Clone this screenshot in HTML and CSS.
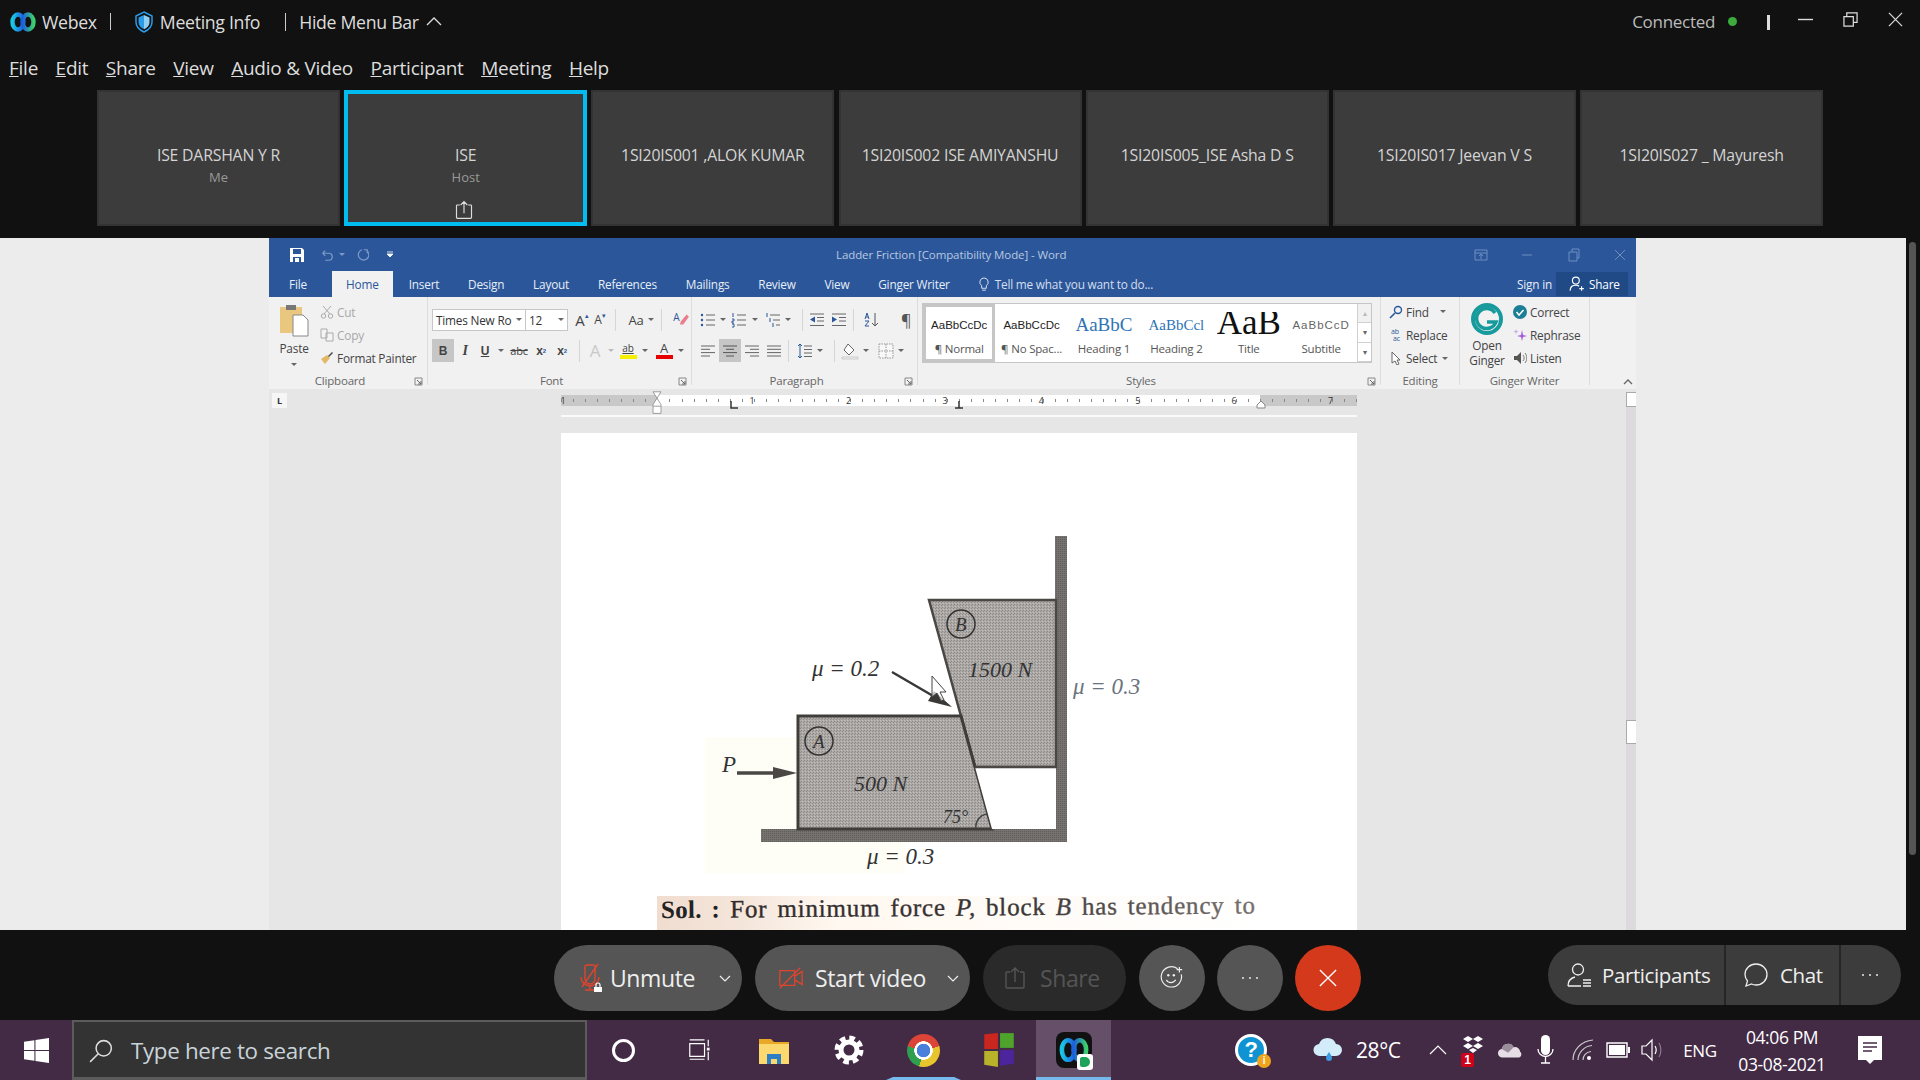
FILE: index.html
```html
<!DOCTYPE html>
<html>
<head>
    <title>Webex Meeting</title>
    <link rel="stylesheet" href="styles.css">
</head>
<body>
    <!-- shared small icons -->
    <svg class="defs" width="0" height="0">
        <symbol id="lines-left" viewBox="0 0 16 16"><path d="M1 3h14M1 6.3h9M1 9.6h14M1 13h9" stroke="#666" fill="none"/></symbol>
        <symbol id="lines-center" viewBox="0 0 16 16"><path d="M1 3h14M4 6.3h8M1 9.6h14M4 13h8" stroke="#555" fill="none"/></symbol>
        <symbol id="lines-right" viewBox="0 0 16 16"><path d="M1 3h14M6 6.3h9M1 9.6h14M6 13h9" stroke="#666" fill="none"/></symbol>
        <symbol id="lines-full" viewBox="0 0 16 16"><path d="M1 3h14M1 6.3h14M1 9.6h14M1 13h14" stroke="#666" fill="none"/></symbol>
        <symbol id="bullets" viewBox="0 0 16 16"><path d="M6 3h9M6 8h9M6 13h9" stroke="#666" fill="none"/><circle cx="2" cy="3" r="1.2" fill="#2b579a"/><circle cx="2" cy="8" r="1.2" fill="#2b579a"/><circle cx="2" cy="13" r="1.2" fill="#2b579a"/></symbol>
        <symbol id="numbers" viewBox="0 0 16 16"><path d="M6 3h9M6 8h9M6 13h9" stroke="#666" fill="none"/><path d="M2 1v4M1 7h2v2H1v2h2M1 12h2v3H1" stroke="#2b579a" fill="none"/></symbol>
        <symbol id="multilevel" viewBox="0 0 16 16"><path d="M5 3h10M8 8h7M11 13h4" stroke="#666" fill="none"/><path d="M2 1v4M5 6v4M8 11v4" stroke="#2b579a" fill="none"/></symbol>
        <symbol id="indent-less" viewBox="0 0 16 16"><path d="M1 2h14M8 5.5h7M8 9h7M1 13.5h14" stroke="#666" fill="none"/><path d="M6 4.5v6L1 7.5z" fill="#2b579a"/></symbol>
        <symbol id="indent-more" viewBox="0 0 16 16"><path d="M1 2h14M8 5.5h7M8 9h7M1 13.5h14" stroke="#666" fill="none"/><path d="M1 4.5v6l5-3z" fill="#2b579a"/></symbol>
        <symbol id="dots" viewBox="0 0 20 4"><circle cx="3" cy="2" r="1.1" fill="#ddd"/><circle cx="10" cy="2" r="1.1" fill="#ddd"/><circle cx="17" cy="2" r="1.1" fill="#ddd"/></symbol>
        <symbol id="launcher" viewBox="0 0 9 9"><path d="M1 1h7v7H1z" fill="none" stroke="#888"/><path d="M3 3l4 4M7 4v3H4" stroke="#666" fill="none"/></symbol>
        <symbol id="share-tray" viewBox="0 0 24 24"><path d="M7 6H4a1 1 0 0 0-1 1v14a1 1 0 0 0 1 1h16a1 1 0 0 0 1-1V7a1 1 0 0 0-1-1h-3M12 16V2M8 6l4-4 4 4" fill="none" stroke="currentColor" stroke-width="1.4"/></symbol>
    </svg>

    <!-- top window bar -->
    <header class="titlebar">
        <svg class="webex-logo" viewBox="0 0 26 20">
            <defs>
                <linearGradient id="wxa" x1="0" x2="1"><stop offset="0" stop-color="#19c6e6"/><stop offset="1" stop-color="#1c5fe0"/></linearGradient>
                <linearGradient id="wxb" x1="0" x2="1"><stop offset="0" stop-color="#1c5fe0"/><stop offset="1" stop-color="#3ccf6c"/></linearGradient>
            </defs>
            <ellipse cx="8" cy="10" rx="5.5" ry="7.5" fill="none" stroke="url(#wxa)" stroke-width="4.4"/>
            <ellipse cx="18" cy="10" rx="5.5" ry="7.5" fill="none" stroke="url(#wxb)" stroke-width="4.4"/>
        </svg>
        <span class="app-name">Webex</span>
        <span class="bar-sep sep-a"></span>
        <svg class="shield" viewBox="0 0 18 22">
            <path d="M9 1l8 4v6c0 5-3.500 8-8 10-4.500-2-8-5-8-10V5z" fill="none" stroke="#2b9be8" stroke-width="1.500"/>
            <path d="M9 4L3.500 6.500V11c0 3.500 2.400 5.800 5.500 7.300z" fill="#2b9be8"/>
            <path d="M9 4l5.500 2.500V11c0 3.500-2.400 5.800-5.500 7.300z" fill="#8ed0f5"/>
        </svg>
        <span class="bar-link meeting-info">Meeting Info</span>
        <span class="bar-sep sep-b"></span>
        <span class="bar-link">Hide Menu Bar</span>
        <svg class="chevron-up" viewBox="0 0 16 9"><path d="M1 8l7-7 7 7" fill="none" stroke="#ddd" stroke-width="1.300"/></svg>

        <div class="titlebar-right">
            <span class="connected">Connected</span>
            <span class="green-dot"></span>
            <span class="thick-sep"></span>
            <svg class="win-btn" viewBox="0 0 16 16"><path d="M0 8h16" stroke="#ddd" stroke-width="1.500"/></svg>
            <svg class="win-btn" viewBox="0 0 16 16"><path d="M1 5h10v10H1zM4 5V1h11v10h-4" fill="none" stroke="#ddd" stroke-width="1.300"/></svg>
            <svg class="win-btn" viewBox="0 0 16 16"><path d="M1 1l14 14M15 1L1 15" stroke="#ddd" stroke-width="1.300"/></svg>
        </div>
    </header>

    <nav class="menubar">
        <span><u>F</u>ile</span>
        <span><u>E</u>dit</span>
        <span><u>S</u>hare</span>
        <span><u>V</u>iew</span>
        <span><u>A</u>udio &amp; Video</span>
        <span><u>P</u>articipant</span>
        <span><u>M</u>eeting</span>
        <span><u>H</u>elp</span>
    </nav>

    <section class="tiles">
        <div class="tile"><div class="tile-name">ISE DARSHAN Y R</div><div class="tile-role">Me</div></div>
        <div class="tile tile-active">
            <div class="tile-name">ISE</div><div class="tile-role">Host</div>
            <svg class="tile-share" viewBox="0 0 24 24"><use href="#share-tray"/></svg>
        </div>
        <div class="tile"><div class="tile-name">1SI20IS001 ,ALOK KUMAR</div></div>
        <div class="tile"><div class="tile-name">1SI20IS002 ISE AMIYANSHU</div></div>
        <div class="tile"><div class="tile-name">1SI20IS005_ISE Asha D S</div></div>
        <div class="tile"><div class="tile-name">1SI20IS017 Jeevan V S</div></div>
        <div class="tile"><div class="tile-name">1SI20IS027 _ Mayuresh</div></div>
    </section>

    <!-- shared screen -->
    <main class="stage">
        <div class="shared">
            <div class="word">
                <div class="word-title">
                    <div class="qat">
                        <svg class="qat-ic qat-save" viewBox="0 0 16 16"><path d="M1 1h12l2 2v12H1z" fill="#fff"/><path d="M4 2h8v5H4z" fill="#2b579a"/><path d="M4 10h8v5H4z" fill="#2b579a"/><path d="M6 11h4v4H6z" fill="#fff"/></svg>
                        <svg class="qat-ic dim" viewBox="0 0 16 16"><path d="M3 6h7a4 4 0 0 1 0 8H6M3 6l3-3M3 6l3 3" fill="none" stroke="#7d9ac6" stroke-width="1.400"/></svg>
                        <i class="caret caret-dim"></i>
                        <svg class="qat-ic dim" viewBox="0 0 16 16"><path d="M10 2h4v4M13.500 3A6 6 0 1 1 8 2" fill="none" stroke="#7d9ac6" stroke-width="1.400"/></svg>
                        <svg class="qat-more" viewBox="0 0 8 8"><path d="M1 1h6M1 3l3 3 3-3z" fill="#fff" stroke="#fff" stroke-width=".8"/></svg>
                    </div>
                    <div class="doc-title">Ladder Friction [Compatibility Mode] - Word</div>
                    <div class="word-win">
                        <svg viewBox="0 0 14 14"><path d="M1 2h12v10H1zM1 5h12M7 11V6M5 8l2-2 2 2" fill="none" stroke="#6f8fc0"/></svg>
                        <svg viewBox="0 0 14 14"><path d="M2 7h10" stroke="#6f8fc0"/></svg>
                        <svg viewBox="0 0 14 14"><path d="M2 4h8v9H2zM5 4V1h7v9h-2" fill="none" stroke="#6f8fc0"/></svg>
                        <svg viewBox="0 0 14 14"><path d="M2 2l10 10M12 2L2 12" stroke="#6f8fc0"/></svg>
                    </div>
                </div>
                <div class="word-tabs">
                    <span class="wtab tab-file">File</span>
                    <span class="wtab tab-home">Home</span>
                    <span class="wtab">Insert</span>
                    <span class="wtab">Design</span>
                    <span class="wtab">Layout</span>
                    <span class="wtab">References</span>
                    <span class="wtab">Mailings</span>
                    <span class="wtab">Review</span>
                    <span class="wtab">View</span>
                    <span class="wtab">Ginger Writer</span>
                    <svg class="bulb" viewBox="0 0 12 16"><path d="M6 1a4.500 4.500 0 0 0-2.500 8.200V12h5V9.200A4.500 4.500 0 0 0 6 1zM4 14h4" fill="none" stroke="#dfe7f3"/></svg>
                    <span class="tell-me">Tell me what you want to do...</span>
                    <span class="sign-in">Sign in</span>
                    <span class="word-share">
                        <svg viewBox="0 0 14 14"><circle cx="6" cy="4" r="3" fill="none" stroke="#fff"/><path d="M1 13c0-3 2-5 5-5 1 0 2 .3 2.800 1M11 9v4M9 11h4" fill="none" stroke="#fff"/></svg>
                        Share
                    </span>
                </div>

                <div class="ribbon">
                    <div class="rgroup g-clipboard">
                        <div class="rbody clip-body">
                            <div class="paste">
                                <svg class="paste-ic" viewBox="0 0 30 34">
                                    <path d="M1 4h22v26H1z" fill="#eac77f"/>
                                    <path d="M7 2h10v5H7z" fill="#777"/>
                                    <path d="M14 12h10l5 5v16H14z" fill="#fff" stroke="#888"/>
                                </svg>
                                <span>Paste</span>
                                <i class="caret"></i>
                            </div>
                            <div class="clip-list">
                                <div class="clip-item off"><svg viewBox="0 0 14 14"><path d="M3 1l7 8M11 1L4 9" stroke="#aaa" fill="none"/><circle cx="3.500" cy="11" r="2.200" fill="none" stroke="#aaa"/><circle cx="10.500" cy="11" r="2.200" fill="none" stroke="#aaa"/></svg>Cut</div>
                                <div class="clip-item off"><svg viewBox="0 0 14 14"><path d="M1 1h6v9H1zM6 5h7v8H6z" fill="#f4f4f4" stroke="#aaa"/></svg>Copy</div>
                                <div class="clip-item"><svg viewBox="0 0 14 14"><path d="M1 8l6-4 3 3-5 6z" fill="#e2b866"/><path d="M8 5l4-4 1 1-4 4z" fill="#444"/></svg>Format Painter</div>
                            </div>
                        </div>
                        <div class="rlabel shifted">Clipboard<svg class="launch" viewBox="0 0 9 9"><use href="#launcher"/></svg></div>
                    </div>

                    <div class="rgroup g-font">
                        <div class="rbody rows">
                            <div class="trow">
                                <span class="combo combo-font">Times New Ro<i class="caret"></i></span>
                                <span class="combo combo-size">12<i class="caret"></i></span>
                                <span class="tool w18 big-a">A<sup>▴</sup></span>
                                <span class="tool w18 small-a">A<sup>▾</sup></span>
                                <span class="vsep"></span>
                                <span class="tool w24 case-a">Aa<i class="caret"></i></span>
                                <span class="vsep"></span>
                                <svg class="ic18 ml4" viewBox="0 0 16 16"><path d="M8 9l5-6 2 2-5 7H7z" fill="#e87d8d"/><text x="1" y="9" font-size="9" fill="#2b579a">A</text></svg>
                            </div>
                            <div class="trow">
                                <span class="tool w22 on fmt">B</span>
                                <span class="tool w22 fmt-i">I</span>
                                <span class="tool w18 fmt-u">U</span><i class="caret"></i>
                                <span class="tool w24 fmt-s">abc</span>
                                <span class="tool w20 fmt">x<sub>2</sub></span>
                                <span class="tool w22 fmt">x<sup>2</sup></span>
                                <span class="vsep"></span>
                                <span class="tool w18 ghost-a">A</span><i class="caret caret-light"></i>
                                <span class="tool w20 mark ml4"><span class="mark-ab">ab</span><b class="swatch yellow"></b></span><i class="caret"></i>
                                <span class="tool w20 mark ml6"><span class="mark-a">A</span><b class="swatch red"></b></span><i class="caret"></i>
                            </div>
                        </div>
                        <div class="rlabel shifted">Font<svg class="launch" viewBox="0 0 9 9"><use href="#launcher"/></svg></div>
                    </div>

                    <div class="rgroup g-para">
                        <div class="rbody rows">
                            <div class="trow">
                                <svg class="ic16" viewBox="0 0 16 16"><use href="#bullets"/></svg><i class="caret m4"></i>
                                <svg class="ic16" viewBox="0 0 16 16"><use href="#numbers"/></svg><i class="caret m5"></i>
                                <svg class="ic16" viewBox="0 0 16 16"><use href="#multilevel"/></svg><i class="caret m4"></i>
                                <span class="vsep"></span>
                                <svg class="ic16" viewBox="0 0 16 16"><use href="#indent-less"/></svg>
                                <svg class="ic16 ml6" viewBox="0 0 16 16"><use href="#indent-more"/></svg>
                                <span class="vsep sep-wide"></span>
                                <svg class="ic16" viewBox="0 0 16 16"><path d="M2 7l2-6 2 6M3 5h2M2 9h4l-4 5h4" fill="none" stroke="#2b579a"/><path d="M12 1v13M9 11l3 3 3-3" fill="none" stroke="#555"/></svg>
                                <span class="pilcrow">¶</span>
                            </div>
                            <div class="trow">
                                <svg class="ic16" viewBox="0 0 16 16"><use href="#lines-left"/></svg>
                                <span class="tool w22 on ml3"><svg class="ic16" viewBox="0 0 16 16"><use href="#lines-center"/></svg></span>
                                <svg class="ic16 ml3" viewBox="0 0 16 16"><use href="#lines-right"/></svg>
                                <svg class="ic16 ml6" viewBox="0 0 16 16"><use href="#lines-full"/></svg>
                                <span class="vsep"></span>
                                <svg class="ic16 ml2" viewBox="0 0 16 16"><path d="M7 3h8M7 6.500h8M7 10h8M7 13.500h8" stroke="#666"/><path d="M3 1v14M1 3l2-2 2 2M1 13l2 2 2-2" fill="none" stroke="#2b579a"/></svg><i class="caret m4"></i>
                                <span class="vsep"></span>
                                <svg class="ic18" viewBox="0 0 18 18"><path d="M7 2l6 6-5 5-5-5z" fill="#fff" stroke="#666"/><path d="M1 15h16v2H1z" fill="#eee" stroke="#aaa" stroke-width=".5"/></svg><i class="caret m4"></i>
                                <svg class="ic16 ml4" viewBox="0 0 16 16"><path d="M1 1h14v14H1zM8 1v14M1 8h14" fill="#f8f8f8" stroke="#999" stroke-dasharray="1.500 1"/></svg><i class="caret m4"></i>
                            </div>
                        </div>
                        <div class="rlabel shifted">Paragraph<svg class="launch" viewBox="0 0 9 9"><use href="#launcher"/></svg></div>
                    </div>

                    <div class="rgroup g-styles">
                        <div class="rbody gallery-wrap">
                            <div class="gallery">
                                <div class="sitem sitem-on"><span class="sample s-normal">AaBbCcDc</span><span class="sname">¶ Normal</span></div>
                                <div class="sitem"><span class="sample s-normal">AaBbCcDc</span><span class="sname">¶ No Spac...</span></div>
                                <div class="sitem"><span class="sample s-h1">AaBbC</span><span class="sname">Heading 1</span></div>
                                <div class="sitem"><span class="sample s-h2">AaBbCcl</span><span class="sname">Heading 2</span></div>
                                <div class="sitem"><span class="sample s-title">AaB</span><span class="sname">Title</span></div>
                                <div class="sitem"><span class="sample s-sub">AaBbCcD</span><span class="sname">Subtitle</span></div>
                                <div class="gal-scroll">
                                    <span class="gal-btn off">▴</span>
                                    <span class="gal-btn">▾</span>
                                    <span class="gal-btn">▾</span>
                                </div>
                            </div>
                        </div>
                        <div class="rlabel shifted">Styles<svg class="launch" viewBox="0 0 9 9"><use href="#launcher"/></svg></div>
                    </div>

                    <div class="rgroup g-edit">
                        <div class="rbody edit-list">
                            <div class="clip-item"><svg viewBox="0 0 14 14"><circle cx="9" cy="5" r="3.500" fill="none" stroke="#2b579a" stroke-width="1.400"/><path d="M6 8l-5 5" stroke="#2b579a" stroke-width="1.600"/></svg>Find<i class="caret ml8"></i></div>
                            <div class="clip-item"><svg viewBox="0 0 14 14"><text x="2" y="6" font-size="7" fill="#2b579a">ab</text><text x="4" y="13" font-size="7" fill="#2b579a">ac</text></svg>Replace</div>
                            <div class="clip-item"><svg viewBox="0 0 14 14"><path d="M3 1v11l3-2 2 4 2-1-2-4h3z" fill="#fff" stroke="#666"/></svg>Select<i class="caret ml2"></i></div>
                        </div>
                        <div class="rlabel">Editing</div>
                    </div>

                    <div class="rgroup g-ginger">
                        <div class="rbody ginger-body">
                            <div class="ginger-open">
                                <svg class="ginger-logo" viewBox="0 0 32 32"><circle cx="16" cy="16" r="14" fill="none" stroke="#179a9c" stroke-width="4"/><path d="M24 10a10 10 0 1 0 1 9H16" fill="none" stroke="#179a9c" stroke-width="3.500"/></svg>
                                <span>Open<br>Ginger</span>
                            </div>
                            <div class="clip-list ginger-list">
                                <div class="clip-item"><svg viewBox="0 0 14 14"><circle cx="7" cy="7" r="7" fill="#1c7e96"/><path d="M3.500 7l2.500 3 4.500-5" fill="none" stroke="#fff" stroke-width="1.500"/></svg>Correct</div>
                                <div class="clip-item"><svg viewBox="0 0 14 14"><path d="M9 2l1 5 4 1-4 1-1 4-1-4-4-1 4-1z" fill="#a35bd8"/><path d="M3 1l.6 2 2 .6-2 .6L3 6.500 2.400 4.200l-2-.6 2-.6z" fill="#c9a1ea"/></svg>Rephrase</div>
                                <div class="clip-item"><svg viewBox="0 0 14 14"><path d="M1 5h3l4-4v12l-4-4H1z" fill="#555"/><path d="M10 4c1.500 2 1.500 4 0 6M12 2c2.400 3 2.400 7 0 10" fill="none" stroke="#777"/></svg>Listen</div>
                            </div>
                        </div>
                        <div class="rlabel">Ginger Writer</div>
                    </div>
                    <svg class="collapse" viewBox="0 0 10 6"><path d="M1 5l4-4 4 4" fill="none" stroke="#666" stroke-width="1.300"/></svg>
                </div>

                <div class="word-body">
                    <span class="tab-stop">L</span>
                    <div class="doc">
                        <div class="ruler">
                            <div class="ruler-nums">
                                <span class="num-edge">1</span>
                                <span>1</span><span>2</span><span>3</span><span>4</span><span>5</span><span>6</span><span>7</span>
                            </div>
                            <svg class="indent-mark" viewBox="0 0 12 30"><path d="M1 1h10L6 9l5 8v11H1V17l5-8z" fill="#fff" stroke="#888"/><path d="M1 19h10" stroke="#888"/></svg>
                            <svg class="tab-mark tab-l" viewBox="0 0 8 8"><path d="M1 0v7h7" fill="none" stroke="#333" stroke-width="1.500"/></svg>
                            <svg class="tab-mark tab-t" viewBox="0 0 8 8"><path d="M4 0v7M0 7h8" fill="none" stroke="#333" stroke-width="1.500"/></svg>
                            <svg class="right-mark" viewBox="0 0 10 9"><path d="M5 1l4 4v3H1V5z" fill="#fff" stroke="#888"/></svg>
                        </div>
                        <div class="prev-page"></div>
                        <svg class="page" viewBox="561 432 796 498">
                            <defs>
                                <pattern id="grain" width="3" height="3" patternUnits="userSpaceOnUse">
                                    <rect width="3" height="3" fill="#aca9a7"/>
                                    <rect width="1" height="1" fill="#8b8886"/>
                                    <rect x="2" y="1" width="1" height="1" fill="#8f8c8a"/>
                                    <rect x="1" y="2" width="1" height="1" fill="#c2bfbd"/>
                                </pattern>
                                <pattern id="wall" width="2" height="2" patternUnits="userSpaceOnUse">
                                    <rect width="2" height="2" fill="#757270"/>
                                    <rect width="1" height="1" fill="#5f5c5a"/>
                                </pattern>
                                <linearGradient id="solbg" x1="0" x2="1"><stop offset="0" stop-color="#f1ddd0"/><stop offset=".14" stop-color="#f4e5da"/><stop offset=".3" stop-color="#fff8f0"/><stop offset="1" stop-color="#fff"/></linearGradient>
                                <linearGradient id="solfill" gradientUnits="userSpaceOnUse" x1="661" x2="1255" y1="0" y2="0"><stop offset="0" stop-color="#2c2827"/><stop offset=".6" stop-color="#3a3635"/><stop offset="1" stop-color="#77716e"/></linearGradient>
                            </defs>
                            <rect x="561" y="432" width="796" height="498" fill="#fff"/>
                            <rect x="705" y="736" width="200" height="136" fill="#fffef6"/>
                            <rect x="657" y="895" width="600" height="35" fill="url(#solbg)"/>

                            <path d="M1055 535h12v306H761v-13h294z" fill="url(#wall)"/>
                            <path d="M929 599H1056V766H975z" fill="url(#grain)" stroke="#4a4745" stroke-width="2.500"/>
                            <path d="M798 715H961L992 828H798z" fill="url(#grain)" stroke="#3f3c3a" stroke-width="3"/>
                            <path d="M975 766H1056V828H992z" fill="#fff"/>
                            <path d="M975 766H1056" stroke="#4a4745" stroke-width="2.500"/>
                            <path d="M976 828a13 13 0 0 1 11-15" fill="none" stroke="#444" stroke-width="1.500"/>

                            <circle cx="961" cy="623" r="14" fill="none" stroke="#333" stroke-width="1.500"/>
                            <circle cx="819" cy="740" r="14" fill="none" stroke="#333" stroke-width="1.500"/>
                            <text class="fig" x="955" y="630" font-size="19">B</text>
                            <text class="fig" x="813" y="747" font-size="19">A</text>

                            <text class="fig fig-big" x="812" y="675">μ = 0.2</text>
                            <text class="fig" x="968" y="676" font-size="22">1500 N</text>
                            <text class="fig fig-big fig-soft" x="1073" y="693">μ = 0.3</text>
                            <text class="fig fig-big" x="867" y="863">μ = 0.3</text>
                            <text class="fig fig-big" x="722" y="771">P</text>
                            <text class="fig" x="854" y="790" font-size="22">500 N</text>
                            <text class="fig" x="943" y="822" font-size="18">75°</text>

                            <path d="M892 671l48 28" stroke="#3a3836" stroke-width="2.500"/>
                            <path d="M952 706l-24-6 6-10z" fill="#3a3836"/>
                            <path d="M737 772h40" stroke="#4a4745" stroke-width="3.500"/>
                            <path d="M797 772l-24-6v12z" fill="#4a4745"/>
                            <path d="M932 675v21l5-4 4 8 3-1-4-8h6z" fill="#fff" fill-opacity=".7" stroke="#444"/>

                            <text class="sol" x="661" y="917" textLength="594" transform="rotate(-.45 661 917)"><tspan class="sol-b">Sol. :</tspan> For minimum force <tspan class="sol-i">P,</tspan> block <tspan class="sol-i">B</tspan> has tendency to</text>
                        </svg>
                    </div>
                    <div class="vscroll">
                        <span class="vs-up"></span>
                        <span class="vs-thumb"></span>
                    </div>
                </div>
            </div>
        </div>
        <div class="stage-scroll"><span class="stage-thumb"></span></div>
    </main>

    <!-- meeting controls -->
    <section class="controls">
        <button class="pill pill-mute">
            <svg class="ctl-ic" viewBox="0 0 24 30"><path d="M8 2h6a2 2 0 0 1 2 2v12a5 5 0 0 1-10 0V4a2 2 0 0 1 2-2zM2 14a9 9 0 0 0 18 0M11 23v4M6 27h10M19 1L3 24" fill="none" stroke="#e0442c" stroke-width="1.400"/><path d="M15 24h8v5h-8z" fill="#fff"/><path d="M17 24v-2a2 2 0 0 1 4 0v2" fill="none" stroke="#fff" stroke-width="1.200"/></svg>
            <span>Unmute</span>
            <svg class="pill-chev" viewBox="0 0 12 7"><path d="M1 1l5 5 5-5" fill="none" stroke="#eee" stroke-width="1.200"/></svg>
        </button>
        <button class="pill pill-video">
            <svg class="ctl-ic cam" viewBox="0 0 28 24"><path d="M2 4h16v16H2zM18 10l8-5v14l-8-5M24 1L2 23" fill="none" stroke="#e0442c" stroke-width="1.400"/></svg>
            <span>Start video</span>
            <svg class="pill-chev" viewBox="0 0 12 7"><path d="M1 1l5 5 5-5" fill="none" stroke="#eee" stroke-width="1.200"/></svg>
        </button>
        <button class="pill pill-share">
            <svg class="ctl-ic share-ic" viewBox="0 0 24 24"><use href="#share-tray"/></svg>
            <span>Share</span>
        </button>
        <button class="round">
            <svg class="emoji" viewBox="0 0 26 26"><path d="M19 3a11 11 0 1 0 4 6" fill="none" stroke="#eee" stroke-width="1.300"/><path d="M7 15c1.500 4 8 4 10 0M21 1v6M18 4h6" fill="none" stroke="#eee" stroke-width="1.300"/><circle cx="9" cy="10" r="1.300" fill="#eee"/><circle cx="15" cy="10" r="1.300" fill="#eee"/></svg>
        </button>
        <button class="round"><svg class="more" viewBox="0 0 20 4"><use href="#dots"/></svg></button>
        <button class="round round-end"><svg class="end-x" viewBox="0 0 20 20"><path d="M1 1l18 18M19 1L1 19" stroke="#fff" stroke-width="1.500"/></svg></button>

        <div class="side-pill">
            <div class="side-item side-people">
                <svg class="side-ic" viewBox="0 0 26 26"><circle cx="12" cy="7.500" r="5.500" fill="none" stroke="#eee" stroke-width="1.300"/><path d="M2 24c0-5 3-8 7-9M2 24h13M17 18h8M17 21h8M17 24h8" fill="none" stroke="#eee" stroke-width="1.300"/></svg>
                Participants
            </div>
            <div class="side-item side-chat">
                <svg class="side-ic" viewBox="0 0 26 26"><path d="M13 2c6 0 11 4.500 11 10.500S19 23 13 23c-2 0-3-.3-4.500-1L3 24l1.500-5C3 17 2 15 2 12.500 2 6.500 7 2 13 2z" fill="none" stroke="#eee" stroke-width="1.300"/></svg>
                Chat
            </div>
            <div class="side-item side-more"><svg class="more" viewBox="0 0 20 4"><use href="#dots"/></svg></div>
        </div>
    </section>

    <!-- windows taskbar -->
    <footer class="taskbar">
        <div class="start">
            <svg viewBox="0 0 24 24"><path d="M0 3.500l10-1.400v9.400H0zM11 2l13-2v11.500H11zM0 12.500h10v9.400L0 20.500zM11 12.500h13V24l-13-2z" fill="#fff"/></svg>
        </div>
        <div class="search">
            <svg viewBox="0 0 22 22"><circle cx="13.500" cy="8.500" r="7" fill="none" stroke="#ddd" stroke-width="1.400"/><path d="M8.500 13.500L1 21" stroke="#ddd" stroke-width="1.400"/></svg>
            <span>Type here to search</span>
        </div>
        <div class="task-slot"><span class="cortana"></span></div>
        <div class="task-slot">
            <svg class="ic24" viewBox="0 0 26 26"><path d="M3 2h16M3 23h16M3 6h16v14H3zM23 2v7M23 15v9" fill="none" stroke="#fff" stroke-width="1.300"/><path d="M21.500 10.500h3v3h-3z" fill="#fff"/></svg>
        </div>
        <div class="task-slot">
            <svg class="ic32" viewBox="0 0 32 32"><path d="M1 5h12l3 3h15v22H1z" fill="#e9a825"/><path d="M1 10h30v20H1z" fill="#fbd96e"/><path d="M9 20h14v10h-4v-5h-6v5H9z" fill="#2d7fc5"/></svg>
        </div>
        <div class="task-slot">
            <svg class="ic30" viewBox="0 0 30 30"><circle cx="15" cy="15" r="8" fill="none" stroke="#fff" stroke-width="5"/><circle cx="15" cy="15" r="12" fill="none" stroke="#fff" stroke-width="5" stroke-dasharray="5.500 3.920"/></svg>
        </div>
        <div class="task-slot slot-open"><span class="chrome"></span></div>
        <div class="task-slot">
            <svg class="ic36" viewBox="0 0 32 36"><path d="M2 3l13-1v15H2z" fill="#c8261e"/><path d="M17 2h13v14H17z" fill="#4ea32b"/><path d="M2 19h13v15L2 32z" fill="#b8b32a"/><path d="M17 18h13v13l-13 2z" fill="#4c249c"/></svg>
        </div>
        <div class="task-slot slot-active">
            <span class="wx-tile">
                <svg viewBox="0 0 26 22"><ellipse cx="8" cy="11" rx="5.500" ry="8.500" fill="none" stroke="url(#wxa)" stroke-width="4"/><ellipse cx="18" cy="11" rx="5.500" ry="8.500" fill="none" stroke="url(#wxb)" stroke-width="4"/></svg>
                <b class="wx-badge"><i></i></b>
            </span>
        </div>

        <div class="tray">
            <div class="tray-slot w-help">
                <span class="help-ic">?<b>i</b></span>
            </div>
            <div class="tray-slot w-weather">
                <svg class="ic32" viewBox="0 0 32 28"><path d="M8 20a6 6 0 0 1-1-12 9 9 0 0 1 17 0 6 6 0 0 1 0 12z" fill="#d3ecfa"/><path d="M17 16c2 3 3 4 3 6a3 3 0 0 1-6 0c0-2 1-3 3-6z" fill="#3d9be0"/></svg>
                <span class="temp">28°C</span>
            </div>
            <div class="tray-slot w-chev"><svg class="chev" viewBox="0 0 18 10"><path d="M1 9l8-8 8 8" fill="none" stroke="#fff" stroke-width="1.200"/></svg></div>
            <div class="tray-slot w-drop">
                <span class="dropbox">
                    <svg viewBox="0 0 24 20"><path d="M7 1l5 3-5 3-5-3zM17 1l5 3-5 3-5-3zM7 8l5 3-5 3-5-3zM17 8l5 3-5 3-5-3zM12 13l4 2-4 3-4-3z" fill="#fff"/></svg>
                    <b>1</b>
                </span>
            </div>
            <div class="tray-slot w-cloud"><svg class="ic24" viewBox="0 0 26 18"><path d="M5 17a4.500 4.500 0 0 1-1-9 7 7 0 0 1 13-2 5.500 5.500 0 0 1 7 5 3.500 3.500 0 0 1-1 6z" fill="#e6e0e6"/><path d="M4 8a7 7 0 0 1 13-2l-6 6z" fill="#9a8d9c"/></svg></div>
            <div class="tray-slot w-mic"><svg class="ic30" viewBox="0 0 20 30"><rect x="6" y="0" width="9" height="20" rx="4.500" fill="#fff"/><path d="M3 14a7.500 7.500 0 0 0 15 0M10.500 22v6M6 28h9" fill="none" stroke="#fff" stroke-width="1.300"/></svg></div>
            <div class="tray-slot w-wifi"><svg class="ic24" viewBox="0 0 24 24"><path d="M2 22C2 12 10 3 22 2M7 22C7 15 13 8 21 7.500M12 22c0-4 3-8 8-8.500" fill="none" stroke="#ccc" stroke-width="1.200"/><circle cx="18" cy="20" r="2" fill="#fff"/></svg></div>
            <div class="tray-slot w-batt"><svg class="batt" viewBox="0 0 24 16"><path d="M1 1h20v14H1z" fill="none" stroke="#fff" stroke-width="1.400"/><path d="M3 3h16v10H3z" fill="#fff"/><path d="M22 5h2v6h-2z" fill="#fff"/></svg></div>
            <div class="tray-slot w-vol"><svg class="ic24" viewBox="0 0 24 24"><path d="M1 8h4l6-6v20l-6-6H1z" fill="none" stroke="#fff" stroke-width="1.200"/><path d="M14 8c1.500 2.500 1.500 5.500 0 8" fill="none" stroke="#fff" stroke-width="1.200"/><path d="M18 5c2.500 4 2.500 10 0 14" fill="none" stroke="#8a7c8c" stroke-width="1.200"/></svg></div>
            <div class="tray-slot w-eng">ENG</div>
            <div class="clock"><span>04:06 PM</span><span>03-08-2021</span></div>
            <div class="tray-slot w-note"><svg class="note" viewBox="0 0 24 30"><path d="M0 1h24v24H16l-4 4-4-4H0z" fill="#fff"/><path d="M5 8h14M5 12h14M5 16h9" stroke="#432a45" stroke-width="1.300"/></svg></div>
        </div>
    </footer>
</body>
</html>
```

FILE: styles.css
```css
* {
    box-sizing: border-box;
}
body {
    margin: 0;
    width: 1920px;
    height: 1080px;
    overflow: hidden;
    display: flex;
    flex-direction: column;
    background: #111;
    color: #ddd;
    font-family: "Open Sans", "Noto Sans", sans-serif;
}
svg {
    display: block;
    flex: none;
}
.defs {
    position: absolute;
}

/* title bar */
.titlebar {
    height: 45px;
    display: flex;
    align-items: center;
    padding: 0 0 2px 10px;
    font-size: 17.700px;
    letter-spacing: -0.3px;
}
.webex-logo {
    width: 26px;
    height: 20px;
}
.app-name {
    margin-left: 6px;
    color: #ddd;
}
.bar-sep {
    width: 1px;
    height: 17px;
    background: #ccc;
}
.sep-a {
    margin: 0 24px 0 13px;
}
.sep-b {
    margin: 0 13px 0 25px;
    height: 18px;
}
.shield {
    width: 18px;
    height: 22px;
}
.bar-link {
    color: #ddd;
}
.meeting-info {
    margin-left: 7px;
}
.chevron-up {
    width: 16px;
    height: 9px;
    margin-left: 7px;
}
.titlebar-right {
    margin-left: auto;
    display: flex;
    align-items: center;
    padding-right: 17px;
}
.connected {
    color: #bbb;
    font-size: 17px;
}
.green-dot {
    width: 9px;
    height: 9px;
    border-radius: 50%;
    background: #3cab3c;
    margin-left: 13px;
}
.thick-sep {
    width: 3px;
    height: 15px;
    background: #ddd;
    margin: 2px -2px 0 30px;
}
.win-btn {
    width: 15px;
    height: 15px;
    margin-left: 30px;
    margin-top: -4px;
}

/* menu bar */
.menubar {
    height: 45px;
    display: flex;
    align-items: center;
    gap: 17.500px;
    padding-left: 9px;
    font-size: 19px;
    letter-spacing: -0.25px;
}

/* participant tiles */
.tiles {
    height: 148px;
    padding-left: 97px;
    display: flex;
    gap: 4.200px;
}
.tile {
    width: 243px;
    height: 136px;
    background: #3c3c3c;
    border: 2px solid #333;
    position: relative;
    display: flex;
    flex-direction: column;
    align-items: center;
    padding-top: 52px;
}
.tile-active {
    border: 4px solid #00bcf0;
    padding-top: 50px;
}
.tile-name {
    font-size: 15.800px;
    line-height: 22px;
    letter-spacing: -0.2px;
    color: #d4d4d4;
}
.tile-role {
    font-size: 13px;
    line-height: 18px;
    color: #999;
    margin-top: 2px;
}
.tile-share {
    position: absolute;
    left: 104px;
    bottom: 2px;
    width: 24px;
    height: 20px;
    color: #ddd;
}

/* shared screen */
.stage {
    height: 692px;
    display: flex;
    flex: none;
}
.shared {
    width: 1906px;
    padding-left: 269px;
    background: #ececec;
}
.stage-scroll {
    flex: 1;
    padding: 4px 0 0 3px;
}
.stage-thumb {
    display: block;
    width: 7px;
    height: 613px;
    border-radius: 4px;
    background: #555;
}
.word {
    width: 1367px;
    height: 692px;
    display: flex;
    flex-direction: column;
    color: #444;
}
.word-title {
    height: 33px;
    background: #2b579a;
    display: flex;
    align-items: center;
    position: relative;
    padding-left: 20px;
}
.qat {
    display: flex;
    align-items: center;
    gap: 4px;
}
.qat-ic {
    width: 14px;
    height: 14px;
    margin-right: 4px;
}
.qat-save {
    width: 16px;
    height: 16px;
    margin-right: 11px;
}
.qat-more {
    width: 8px;
    height: 8px;
    margin-left: 9px;
}
.doc-title {
    position: absolute;
    left: 567px;
    font-size: 11.500px;
    letter-spacing: -0.1px;
    color: #b9c8e0;
}
.word-win {
    margin-left: auto;
    display: flex;
    gap: 32.500px;
    padding-right: 9px;
}
.word-win svg {
    width: 14px;
    height: 14px;
}
.word-tabs {
    height: 26px;
    background: #2b579a;
    display: flex;
    align-items: center;
    font-size: 11.800px;
    letter-spacing: -0.2px;
    color: #e8eef6;
}
.wtab {
    margin-left: 28.800px;
}
.tab-file {
    margin-left: 20px;
}
.tab-home {
    margin-left: 25px;
    height: 26px;
    width: 61px;
    background: #f1f1f1;
    color: #2b579a;
    display: flex;
    align-items: center;
    justify-content: center;
    margin-right: -13px;
}
.bulb {
    width: 12px;
    height: 15px;
    margin-left: 28px;
}
.tell-me {
    margin-left: 5px;
    color: #d5deec;
}
.sign-in {
    margin-left: auto;
}
.word-share {
    margin: 0 8px 0 4px;
    width: 72px;
    height: 24px;
    background: #1f4a85;
    display: flex;
    align-items: center;
    gap: 4px;
    padding-left: 13px;
    color: #fff;
}
.word-share svg {
    width: 16px;
    height: 16px;
}

/* ribbon */
.ribbon {
    height: 92px;
    background: #f1f1f1;
    display: flex;
    position: relative;
    flex: none;
    font-size: 11.800px;
    letter-spacing: -0.2px;
}
.rgroup {
    display: flex;
    flex-direction: column;
    border-right: 1px solid #dcdcdc;
    margin-bottom: 4px;
}
.rbody {
    height: 77px;
    flex: none;
}
.rlabel {
    height: 14px;
    line-height: 14px;
    text-align: center;
    color: #666;
    position: relative;
    font-size: 11.500px;
}
.shifted {
    padding-right: 16px;
}
.launch {
    position: absolute;
    right: 4px;
    top: 3px;
    width: 9px;
    height: 9px;
}
.g-clipboard {
    width: 159px;
}
.g-font {
    width: 264px;
}
.g-para {
    width: 226px;
}
.g-styles {
    width: 463px;
}
.g-edit {
    width: 79px;
}
.g-ginger {
    width: 130px;
}
.caret {
    display: inline-block;
    flex: none;
    width: 0;
    height: 0;
    border: 3px solid transparent;
    border-top: 3px solid #666;
    border-bottom: 0;
    margin-left: 4px;
}
.caret-dim {
    border-top-color: #7d9ac6;
    margin: 0 6px 0 -3px;
}
.caret-light {
    border-top-color: #bbb;
}
.m4 {
    margin: 0 5px 0 4px;
}
.m5 {
    margin: 0 7px 0 5px;
}
.ml2 {
    margin-left: 2px;
}
.ml3 {
    margin-left: 3px;
}
.ml4 {
    margin-left: 4px;
}
.ml6 {
    margin-left: 6px;
}
.ml8 {
    margin-left: 8px;
}
.clip-body {
    display: flex;
    padding: 3px 0 0 11px;
}
.paste {
    width: 28px;
    display: flex;
    flex-direction: column;
    align-items: center;
    padding-top: 3px;
}
.paste-ic {
    width: 30px;
    height: 34px;
}
.paste span {
    margin-top: 3px;
}
.paste .caret {
    margin: 7px 0 0;
}
.clip-list {
    margin-left: 12px;
    display: flex;
    flex-direction: column;
}
.clip-item {
    height: 23.300px;
    display: flex;
    align-items: center;
    gap: 3px;
    white-space: nowrap;
}
.clip-item svg {
    width: 14px;
    height: 14px;
}
.off {
    color: #a8a8a8;
}
.rows {
    display: flex;
    flex-direction: column;
    padding: 11px 0 0 4px;
    gap: 8px;
}
.g-para .rows {
    padding-left: 8px;
}
.trow {
    height: 23px;
    display: flex;
    align-items: center;
}
.combo {
    height: 22px;
    background: #fff;
    border: 1px solid #c6c6c6;
    display: flex;
    align-items: center;
    justify-content: space-between;
    padding: 0 3px;
    color: #333;
}
.combo-font {
    width: 94px;
}
.combo-size {
    width: 43px;
    margin-left: -1px;
    margin-right: 5px;
}
.tool {
    height: 23px;
    flex: none;
    display: flex;
    align-items: center;
    justify-content: center;
    color: #444;
}
.w18 {
    width: 18px;
}
.w20 {
    width: 20px;
}
.w22 {
    width: 22px;
}
.w24 {
    width: 24px;
}
.on {
    background: #c6c6c6;
}
.big-a {
    font-size: 15px;
}
.small-a {
    font-size: 12px;
}
.big-a sup,
.small-a sup {
    font-size: 7px;
    color: #2b579a;
    margin-top: -8px;
    letter-spacing: 0;
}
.case-a {
    font-size: 13px;
    width: 28px;
    margin-left: 5px;
}
.vsep {
    width: 1px;
    height: 22px;
    background: #d6d6d6;
    margin: 0 6px;
    flex: none;
}
.sep-wide {
    margin-right: 9px;
}
.fmt {
    font-family: "Liberation Sans", sans-serif;
    font-weight: 700;
    font-size: 12px;
}
.fmt sub,
.fmt sup {
    font-size: 6px;
    color: #2b579a;
}
.fmt-i {
    font-family: "Liberation Serif", serif;
    font-style: italic;
    font-weight: 700;
    font-size: 14px;
}
.fmt-u {
    font-family: "Liberation Sans", sans-serif;
    font-weight: 700;
    font-size: 12px;
    text-decoration: underline;
}
.fmt-s {
    font-size: 11px;
    text-decoration: line-through;
    margin-left: 3px;
}
.ghost-a {
    font-size: 17px;
    color: #c9c9c9;
}
.mark {
    flex-direction: column;
    line-height: 13px;
}
.mark-ab {
    font-size: 10px;
    text-decoration: underline;
}
.mark-a {
    font-size: 13px;
}
.swatch {
    display: block;
    width: 17px;
    height: 4px;
}
.yellow {
    background: #f5f000;
}
.red {
    background: #e60000;
}
.ic16 {
    width: 16px;
    height: 16px;
}
.ic18 {
    width: 18px;
    height: 18px;
}
.pilcrow {
    font-size: 16px;
    margin-left: 22px;
    color: #555;
}

/* styles gallery */
.gallery-wrap {
    padding: 6px 0 0 4px;
}
.gallery {
    width: 450px;
    height: 60px;
    background: #fff;
    border: 1px solid #c6c6c6;
    display: flex;
}
.sitem {
    width: 72.400px;
    flex: none;
    display: flex;
    flex-direction: column;
    align-items: center;
    overflow: hidden;
    border: 3px solid transparent;
    padding-top: 5px;
}
.sitem-on {
    border-color: #c6c6c6;
}
.sample {
    height: 26px;
    line-height: 26px;
    white-space: nowrap;
    color: #222;
    font-family: "Liberation Sans", sans-serif;
    letter-spacing: 0;
    overflow: hidden;
}
.s-normal {
    font-size: 11.500px;
}
.s-h1 {
    font-family: "Liberation Serif", serif;
    font-size: 19px;
    color: #2e74b5;
}
.s-h2 {
    font-family: "Liberation Serif", serif;
    font-size: 15px;
    color: #2e74b5;
}
.s-title {
    font-family: "Liberation Serif", serif;
    font-size: 35px;
    color: #111;
    line-height: 22px;
}
.s-sub {
    font-size: 11.500px;
    color: #666;
    letter-spacing: 1px;
}
.sname {
    margin-top: 3px;
    white-space: nowrap;
    color: #555;
    font-size: 11.500px;
}
.gal-scroll {
    margin-left: auto;
    width: 15px;
    display: flex;
    flex-direction: column;
    border-left: 1px solid #d0d0d0;
}
.gal-btn {
    flex: 1;
    font-size: 8px;
    text-align: center;
    line-height: 18px;
    color: #666;
    border-bottom: 1px solid #d0d0d0;
}
.gal-btn.off {
    background: #f1f1f1;
    color: #bbb;
}
.edit-list {
    padding: 3px 0 0 8px;
}
.ginger-body {
    display: flex;
    padding: 3px 0 0 9px;
}
.ginger-open {
    width: 36px;
    display: flex;
    flex-direction: column;
    align-items: center;
    text-align: center;
    line-height: 15px;
    padding-top: 3px;
}
.ginger-logo {
    width: 32px;
    height: 32px;
    margin-bottom: 3px;
}
.ginger-list {
    margin-left: 8px;
}
.collapse {
    position: absolute;
    right: 3px;
    bottom: 4px;
    width: 10px;
    height: 6px;
}

/* document area */
.word-body {
    flex: 1;
    display: flex;
    background: #e6e6e6;
    position: relative;
    min-height: 0;
}
.tab-stop {
    position: absolute;
    left: 3px;
    top: 4px;
    width: 15px;
    height: 15px;
    background: #f6f6f6;
    font-size: 9px;
    font-weight: 700;
    text-align: center;
    line-height: 15px;
    color: #333;
}
.doc {
    width: 1357px;
    padding-left: 292px;
    overflow: hidden;
}
.ruler {
    width: 796px;
    height: 11px;
    margin-top: 6px;
    position: relative;
    background:
        repeating-linear-gradient(90deg, #888 0 1px, transparent 1px 12.050px) 0 50% / 100% 3px no-repeat,
        linear-gradient(90deg, #c8c8c8 0 96px, #fff 96px 699px, #c8c8c8 699px);
}
.ruler-nums {
    display: flex;
    height: 11px;
    padding-left: 143px;
    font-size: 9px;
    line-height: 11px;
    color: #333;
    position: relative;
}
.ruler-nums span {
    width: 96.400px;
    flex: none;
    text-align: center;
}
.ruler-nums .num-edge {
    position: absolute;
    left: -2px;
    width: 8px;
}
.indent-mark {
    position: absolute;
    left: 90px;
    top: -4px;
    width: 12px;
    height: 24px;
}
.tab-mark {
    position: absolute;
    width: 8px;
    height: 8px;
    top: 6px;
}
.tab-l {
    left: 169px;
}
.tab-t {
    left: 394px;
}
.right-mark {
    position: absolute;
    left: 695px;
    top: 5px;
    width: 10px;
    height: 9px;
}
.prev-page {
    width: 796px;
    height: 2px;
    margin-top: 9px;
    background: #fafafa;
}
.page {
    width: 796px;
    height: 498px;
    margin-top: 16px;
}
.fig {
    font-family: "Liberation Serif", serif;
    font-style: italic;
    fill: #333;
}
.fig-big {
    font-size: 23px;
}
.fig-soft {
    fill: #6b7480;
}
.sol {
    font-family: "Liberation Serif", serif;
    font-size: 25px;
    fill: url(#solfill);
    stroke: url(#solfill);
    stroke-width: .35px;
    word-spacing: 3px;
}
.sol-b {
    font-weight: 700;
    fill: #222;
    stroke: none;
    letter-spacing: -0.5px;
}
.sol-i {
    font-style: italic;
}
.vscroll {
    width: 10px;
    background: #dcdadc;
    margin-top: 3px;
    position: relative;
}
.vs-up {
    display: block;
    height: 15px;
    background: #fff;
    border: 1px solid #aaa;
    border-right: 0;
}
.vs-thumb {
    position: absolute;
    left: 0;
    top: 328px;
    width: 10px;
    height: 24px;
    background: #fff;
    border: 1px solid #aaa;
    border-right: 0;
}

/* controls */
.controls {
    height: 90px;
    flex: none;
    display: flex;
    align-items: flex-start;
    padding: 15px 19px 0 554px;
    gap: 13px;
    background: #111;
}
.pill,
.round {
    height: 66px;
    border: 0;
    border-radius: 33px;
    background: #555;
    color: #eee;
    display: flex;
    align-items: center;
    font-family: inherit;
    font-size: 23px;
    letter-spacing: -0.4px;
    padding: 0;
}
.pill-mute {
    width: 188px;
    padding-left: 25px;
}
.pill-video {
    width: 215px;
    padding-left: 23px;
}
.pill-share {
    width: 143px;
    padding-left: 20px;
    background: #2a2a2a;
    color: #555;
}
.ctl-ic {
    width: 24px;
    height: 30px;
    margin-right: 7px;
}
.cam {
    width: 26px;
    height: 24px;
    margin-right: 11px;
}
.share-ic {
    width: 24px;
    height: 24px;
    margin-right: 13px;
    color: #555;
}
.pill-chev {
    width: 12px;
    height: 7px;
    margin-left: auto;
    margin-right: 11px;
}
.round {
    width: 66px;
    justify-content: center;
}
.round + .round {
    margin-left: -1px;
}
.round-end {
    background: #d4391c;
}
.emoji {
    width: 24px;
    height: 26px;
}
.more {
    width: 20px;
    height: 4px;
}
.end-x {
    width: 18px;
    height: 20px;
}
.side-pill {
    margin-left: auto;
    width: 353px;
    height: 60px;
    border-radius: 30px;
    background: #3c3c3c;
    display: flex;
    overflow: hidden;
    font-size: 20.500px;
    letter-spacing: -0.4px;
    color: #eee;
}
.side-item {
    display: flex;
    align-items: center;
    border-right: 2px solid #262626;
}
.side-people {
    width: 178px;
    padding-left: 18px;
    gap: 10px;
}
.side-chat {
    width: 115px;
    padding-left: 17px;
    gap: 11px;
}
.side-more {
    flex: 1;
    border: 0;
    padding-left: 19px;
}
.side-ic {
    width: 26px;
    height: 26px;
}

/* taskbar */
.taskbar {
    height: 60px;
    flex: none;
    background: #432a45;
    display: flex;
    color: #fff;
}
.start {
    width: 72px;
    display: flex;
    align-items: center;
    justify-content: center;
}
.start svg {
    width: 25px;
    height: 25px;
}
.search {
    width: 515px;
    height: 60px;
    margin-right: -1px;
    background: #333;
    border: 2px solid #5c5c5c;
    border-bottom-width: 3px;
    display: flex;
    align-items: center;
    padding: 2px 0 0 15px;
    gap: 18px;
    font-size: 22.400px;
    letter-spacing: -0.35px;
    color: #c9d3da;
}
.search svg {
    width: 24px;
    height: 24px;
}
.task-slot {
    width: 75px;
    flex: none;
    display: flex;
    align-items: center;
    justify-content: center;
    border-bottom: 3px solid transparent;
    padding-top: 3px;
}
.slot-open {
    border-bottom-color: #76b9ed;
    border-left: 7px solid #432a45;
    border-right: 7px solid #432a45;
}
.slot-active {
    background: #654f69;
    border-bottom-color: #76b9ed;
}
.cortana {
    width: 23px;
    height: 23px;
    border: 3.500px solid #fff;
    border-radius: 50%;
}
.ic24 {
    width: 24px;
    height: 24px;
}
.ic30 {
    width: 30px;
    height: 30px;
}
.ic32 {
    width: 32px;
    height: 32px;
}
.ic36 {
    width: 34px;
    height: 38px;
}
.chrome {
    width: 33px;
    height: 33px;
    border-radius: 50%;
    background:
        radial-gradient(circle, #4a7fdc 0 6.500px, #fff 7px 9px, transparent 9.500px),
        conic-gradient(from -75deg, #dc4437 0 150deg, #e8c52c 150deg 270deg, #2f9e4f 270deg);
}
.wx-tile {
    width: 36px;
    height: 36px;
    border-radius: 8px;
    background: #111;
    position: relative;
    display: flex;
    align-items: center;
    justify-content: center;
}
.wx-tile svg {
    width: 30px;
    height: 26px;
}
.wx-badge {
    position: absolute;
    right: -1px;
    bottom: -2px;
    width: 16px;
    height: 16px;
    background: #fff;
    border-radius: 3px;
    padding: 3px;
}
.wx-badge i {
    display: block;
    width: 10px;
    height: 10px;
    border-radius: 2px 5px 5px 2px;
    background: #1fa35a;
}
.tray {
    margin-left: auto;
    display: flex;
    align-items: center;
    padding-right: 26px;
    font-size: 19px;
    letter-spacing: -0.4px;
}
.tray-slot {
    display: flex;
    align-items: center;
    justify-content: center;
    flex: none;
}
.w-help {
    width: 60px;
}
.help-ic {
    width: 32px;
    height: 32px;
    border-radius: 50%;
    background: #0f93d2;
    border: 3px solid #fff;
    color: #fff;
    font: 700 22px/26px "Liberation Sans", sans-serif;
    text-align: center;
    position: relative;
}
.help-ic b {
    position: absolute;
    right: -7px;
    bottom: -5px;
    width: 14px;
    height: 14px;
    border-radius: 50%;
    background: #f0a41c;
    font-size: 10px;
    line-height: 14px;
}
.w-weather {
    width: 133px;
    justify-content: flex-start;
    padding-left: 31px;
    gap: 12px;
}
.temp {
    font-size: 21px;
}
.w-chev {
    width: 48px;
}
.chev {
    width: 18px;
    height: 10px;
}
.w-drop {
    width: 22px;
}
.dropbox {
    width: 24px;
    height: 30px;
    flex: none;
    position: relative;
}
.dropbox svg {
    width: 24px;
    height: 20px;
}
.dropbox b {
    position: absolute;
    left: 0;
    bottom: -2px;
    width: 13px;
    height: 14px;
    background: #d0021b;
    border-radius: 2px;
    font: 700 12px/14px "Liberation Sans", sans-serif;
    text-align: center;
}
.w-cloud {
    width: 52px;
}
.w-mic {
    width: 18px;
}
.w-wifi {
    width: 58px;
}
.w-batt {
    width: 12px;
}
.batt {
    width: 24px;
    height: 16px;
}
.w-vol {
    width: 58px;
}
.w-eng {
    width: 36px;
    font-size: 17px;
}
.clock {
    width: 128px;
    display: flex;
    flex-direction: column;
    align-items: center;
    gap: 3px;
    font-size: 17.500px;
    line-height: 24px;
}
.w-note {
    width: 48px;
}
.note {
    width: 24px;
    height: 30px;
}
```
